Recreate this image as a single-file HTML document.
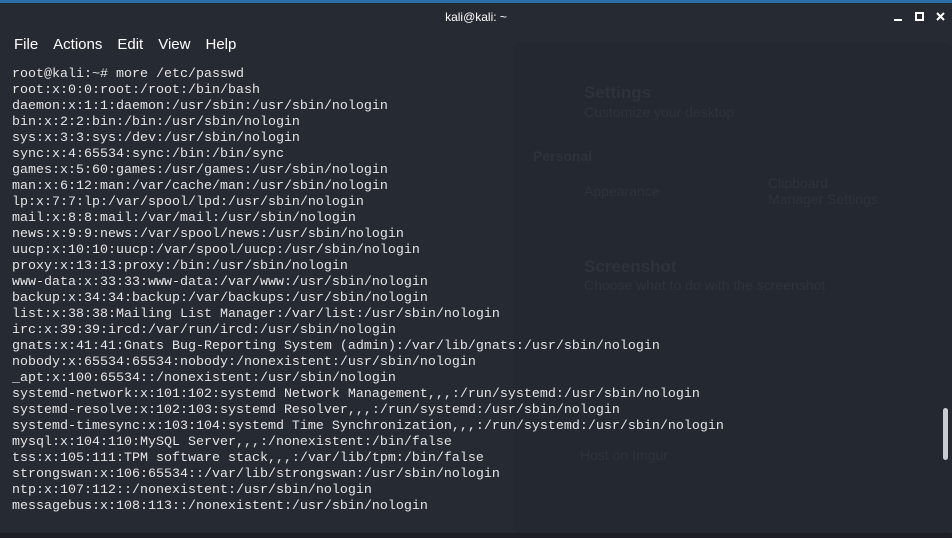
<!DOCTYPE html>
<html><head><style>
body{margin:0;width:952px;height:538px;background:#262a33;overflow:hidden;position:relative;font-family:"Liberation Sans",sans-serif}
.top{position:absolute;left:0;top:0;width:952px;height:3px;background:#2c6ea8}
.title{position:absolute;top:10px;left:0;width:952px;text-align:center;color:#fff;font-size:12px}
.menu{position:absolute;top:36px;left:14px;color:#fff;font-size:15px}
.menu span{margin-right:15px}
.panel{position:absolute;left:513px;top:43px;width:439px;height:490px;background:#242831;border-radius:6px}
pre{position:absolute;left:12px;top:67px;margin:0;font-family:"Liberation Mono",monospace;font-size:13.33px;line-height:16px;color:#e4e4e4}
.sb{position:absolute;left:943px;top:408px;width:5px;height:52px;background:#c9cbd0;border-radius:3px}
.btm{position:absolute;left:0;top:533px;width:952px;height:5px;background:#1c1f26}
.ghost{position:absolute;color:#2e323b;font-size:16px}
</style></head><body>
<div class="top"></div>
<div class="panel"></div>
<div class="ghost" style="left:584px;top:83px;font-weight:bold;font-size:17px">Settings</div>
<div class="ghost" style="left:584px;top:104px;font-size:14px">Customize your desktop</div>
<div class="ghost" style="left:533px;top:148px;font-weight:bold;font-size:14px">Personal</div>
<div class="ghost" style="left:584px;top:183px;font-size:14px">Appearance</div>
<div class="ghost" style="left:768px;top:175px;font-size:14px">Clipboard<br>Manager Settings</div>
<div class="ghost" style="left:584px;top:257px;font-weight:bold;font-size:17px">Screenshot</div>
<div class="ghost" style="left:584px;top:277px;font-size:14px">Choose what to do with the screenshot</div>
<div class="ghost" style="left:580px;top:447px;font-size:14px">Host on Imgur</div>
<div class="title">kali@kali: ~</div>
<svg style="position:absolute;left:890px;top:11px" width="60" height="16"><rect x="4" y="8" width="8" height="2" fill="#fff"/><rect x="26" y="2" width="7" height="7" fill="none" stroke="#fff" stroke-width="2"/><path d="M47 2l7 7M54 2l-7 7" stroke="#fff" stroke-width="2"/></svg>
<div class="menu"><span>File</span><span>Actions</span><span>Edit</span><span>View</span><span>Help</span></div>
<pre>root@kali:~# more /etc/passwd
root:x:0:0:root:/root:/bin/bash
daemon:x:1:1:daemon:/usr/sbin:/usr/sbin/nologin
bin:x:2:2:bin:/bin:/usr/sbin/nologin
sys:x:3:3:sys:/dev:/usr/sbin/nologin
sync:x:4:65534:sync:/bin:/bin/sync
games:x:5:60:games:/usr/games:/usr/sbin/nologin
man:x:6:12:man:/var/cache/man:/usr/sbin/nologin
lp:x:7:7:lp:/var/spool/lpd:/usr/sbin/nologin
mail:x:8:8:mail:/var/mail:/usr/sbin/nologin
news:x:9:9:news:/var/spool/news:/usr/sbin/nologin
uucp:x:10:10:uucp:/var/spool/uucp:/usr/sbin/nologin
proxy:x:13:13:proxy:/bin:/usr/sbin/nologin
www-data:x:33:33:www-data:/var/www:/usr/sbin/nologin
backup:x:34:34:backup:/var/backups:/usr/sbin/nologin
list:x:38:38:Mailing List Manager:/var/list:/usr/sbin/nologin
irc:x:39:39:ircd:/var/run/ircd:/usr/sbin/nologin
gnats:x:41:41:Gnats Bug-Reporting System (admin):/var/lib/gnats:/usr/sbin/nologin
nobody:x:65534:65534:nobody:/nonexistent:/usr/sbin/nologin
_apt:x:100:65534::/nonexistent:/usr/sbin/nologin
systemd-network:x:101:102:systemd Network Management,,,:/run/systemd:/usr/sbin/nologin
systemd-resolve:x:102:103:systemd Resolver,,,:/run/systemd:/usr/sbin/nologin
systemd-timesync:x:103:104:systemd Time Synchronization,,,:/run/systemd:/usr/sbin/nologin
mysql:x:104:110:MySQL Server,,,:/nonexistent:/bin/false
tss:x:105:111:TPM software stack,,,:/var/lib/tpm:/bin/false
strongswan:x:106:65534::/var/lib/strongswan:/usr/sbin/nologin
ntp:x:107:112::/nonexistent:/usr/sbin/nologin
messagebus:x:108:113::/nonexistent:/usr/sbin/nologin</pre>
<div class="sb"></div>
<div class="btm"></div>
</body></html>
